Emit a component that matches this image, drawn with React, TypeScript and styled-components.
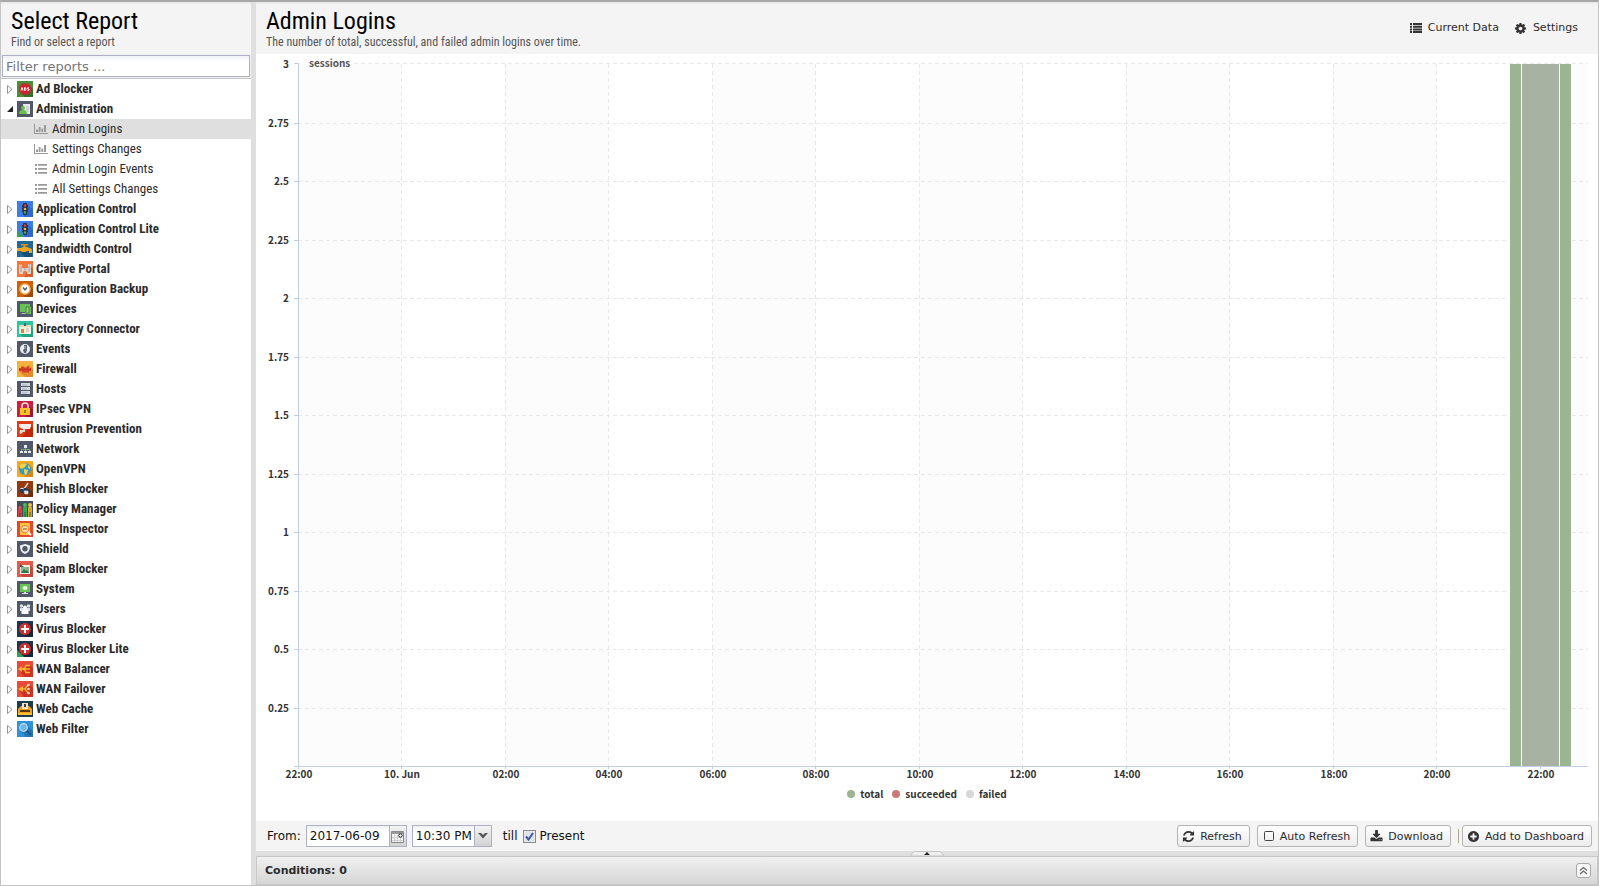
import React, { useLayoutEffect, useRef, useState } from 'react';
import styled, { createGlobalStyle } from 'styled-components';

const condensed = `"Roboto Condensed", "Liberation Sans Narrow", "DejaVu Sans Condensed", sans-serif`;
const ui = `"DejaVu Sans", sans-serif`;
const chartFont = `"Noto Sans CJK SC", "Noto Sans", sans-serif`;

const GlobalStyle = createGlobalStyle`
  *, *::before, *::after { box-sizing: border-box; }
  body { margin: 0; background: #dfdfdf; font-family: ${ui}; font-size: 12px; color: #2b2b2b; }
  button, input, select { font: inherit; color: inherit; margin: 0; }
  ul { list-style: none; margin: 0; padding: 0; }
`;

/* ---------- layout ---------- */

const Page = styled.div`
  display: flex;
  gap: 5px;
  min-height: 100vh;
  border: 1px solid #c4c4c4;
  border-top: 2px solid #a8a8a8;
  background: #dfdfdf;
`;

const Sidebar = styled.aside`
  flex: 0 0 250px;
  display: flex;
  flex-direction: column;
  background: #fff;
`;

const Main = styled.main`
  flex: 1;
  min-width: 0;
  display: flex;
  flex-direction: column;
`;

const Header = styled.header`
  display: flex;
  align-items: center;
  justify-content: space-between;
  height: 52px;
  padding: 0 20px 0 10px;
  background: linear-gradient(#e8e8e8, #f4f4f4 3px);
  color: #000;
`;

const Title = styled.h1`
  margin: 0;
  font: 400 24px/28px ${condensed};
`;

const Subtitle = styled.p`
  margin: 0;
  font: 400 12px/14px ${condensed};
  color: #555;
`;

const HeaderActions = styled.div`
  display: flex;
  gap: 15px;
`;

const LinkButton = styled.button`
  display: flex;
  align-items: center;
  gap: 6px;
  padding: 0;
  border: 0;
  background: none;
  font-size: 11px;
  line-height: 16px;
  color: #2b2b2b;
`;

/* ---------- report tree ---------- */

const FilterBar = styled.div`
  padding: 1px;
  background: #f0f0f0;
  border-bottom: 1px solid #c4c4c4;
`;

const FilterInput = styled.input`
  display: block;
  width: 100%;
  height: 22px;
  padding: 0 3px;
  border: 1px solid #aeb1c6;
  background: linear-gradient(#eef0f4, #fff 5px);
  font-size: 13px;
  &::placeholder { color: #757575; }
`;

const TreeRow = styled.button`
  display: flex;
  align-items: center;
  width: 100%;
  height: 20px;
  padding: 0 0 0 4px;
  border: 0;
  background: none;
  text-align: left;
  font: 700 13px/20px ${condensed};
  white-space: nowrap;
  svg { flex: none; }
`;

const RowIcon = styled.svg`
  margin-right: 3px;
`;

const Leaf = styled.a<{ $selected?: boolean }>`
  display: flex;
  align-items: center;
  gap: 4px;
  height: 20px;
  padding-left: 33px;
  background: ${p => (p.$selected ? '#dfdfdf' : 'transparent')};
  color: #2b2b2b;
  text-decoration: none;
  font: 400 13px/20px ${condensed};
  white-space: nowrap;
`;

/* ---------- chart ---------- */

const ChartPanel = styled.section`
  flex: 1;
  min-height: 300px;
  display: flex;
  flex-direction: column;
  padding-bottom: 18px;
  background: #fff;
`;

const Canvas = styled.div`
  flex: 1;
  min-height: 0;
  overflow: hidden;
  svg { display: block; }
  text { font: 700 10px ${chartFont}; fill: #333; }
  .axis-title { fill: #555; }
`;

const Legend = styled.ul`
  display: flex;
  justify-content: center;
  gap: 9px;
  font: 700 10px/18px ${chartFont};
  color: #333;
`;

const LegendItem = styled.li<{ $color: string }>`
  display: flex;
  align-items: center;
  gap: 5px;
  &::before {
    content: '';
    width: 8px;
    height: 8px;
    border-radius: 50%;
    background: ${p => p.$color};
  }
`;

/* ---------- footer toolbar ---------- */

const Toolbar = styled.form`
  display: flex;
  align-items: center;
  justify-content: space-between;
  height: 30px;
  padding: 0 6px 0 11px;
  background: #f4f4f4;
  color: #111;
  font-size: 12px;
`;

const Group = styled.div`
  display: flex;
  align-items: center;
  gap: 5px;
`;

const Actions = styled(Group)`
  gap: 7px;
`;

const Field = styled.span`
  display: flex;
  position: relative;
  height: 22px;
  border: 1px solid #aeb1c6;
  background: linear-gradient(#eef0f4, #fff 5px);
`;

const DateInput = styled.input`
  width: 82px;
  padding: 0 3px;
  border: 0;
  background: none;
  font-size: 12px;
`;

const TriggerFace = styled.span`
  display: flex;
  align-items: center;
  justify-content: center;
  width: 17px;
  height: 20px;
  padding: 0;
  border: 0;
  border-left: 1px solid #aeb1c6;
  background: linear-gradient(#f4f4f4, #d2d2d2);
`;

const SelectArrow = styled(TriggerFace)`
  position: absolute;
  right: 0;
  top: 0;
  pointer-events: none;
`;

const TimeSelect = styled.select`
  width: 78px;
  padding: 0 20px 0 3px;
  border: 0;
  appearance: none;
  background: none;
  font-size: 12px;
`;

const CheckLabel = styled.label`
  display: flex;
  align-items: center;
  gap: 4px;
`;

const CheckBox = styled.span`
  display: grid;
  place-items: center;
  > * { grid-area: 1 / 1; }
  svg { pointer-events: none; }
`;

const CheckInput = styled.input`
  appearance: none;
  width: 13px;
  height: 13px;
  border: 1px solid #8b8b8b;
  box-shadow: inset 0 0 0 1px #e8e8e8;
  background: #dfe3ea;
  &:not(:checked) + svg { display: none; }
`;

const Till = styled.span`
  margin-left: 6px;
`;

const ToolButton = styled.button`
  display: flex;
  align-items: center;
  gap: 5px;
  height: 22px;
  padding: 0 7px 0 4px;
  border: 1px solid #b4b4b4;
  border-radius: 3px;
  background: linear-gradient(#fff, #ececec);
  font-size: 11px;
  color: #2b2b2b;
  white-space: nowrap;
`;

const Separator = styled.span`
  width: 1px;
  height: 14px;
  margin-right: -4px;
  background: #aca899;
`;

const Splitter = styled.div`
  display: flex;
  justify-content: center;
  align-items: flex-end;
  height: 5px;
  background: #dfdfdf;
`;

const Conditions = styled.section`
  display: flex;
  align-items: center;
  justify-content: space-between;
  height: 29px;
  padding: 0 6px 0 8px;
  border: 1px solid #c8c8c8;
  background: linear-gradient(#f0f0f0, #d6d6d6);
`;

const ConditionsTitle = styled.h2`
  margin: 0;
  font: 700 11px/16px ${ui};
`;

const ExpandButton = styled.button`
  display: grid;
  place-items: center;
  width: 15px;
  height: 15px;
  padding: 0;
  border: 1px solid #a8a8a8;
  border-radius: 3px;
  background: #f6f6f6;
`;

/* ---------- icons ---------- */

const Glyph = ({ d, size = 13 }: { d: string; size?: number }) => (
  <svg width={size} height={size} viewBox="0 0 1792 1792" fill="#333" aria-hidden="true">
    <path d={d} />
  </svg>
);

const COG =
  'M1152 896q0-106-75-181t-181-75-181 75-75 181 75 181 181 75 181-75 75-181zm512-109v222q0 12-8 23t-20 13l-185 28q-19 54-39 91 35 50 107 138 10 12 10 25t-9 23q-27 37-99 108t-94 71q-12 0-26-9l-138-108q-44 23-91 38-16 136-29 186-7 28-36 28h-222q-14 0-24.5-8.5t-11.5-21.5l-28-184q-49-16-90-37l-141 107q-10 9-25 9-14 0-25-11-126-114-165-168-7-10-7-23 0-12 8-23 15-21 51-66.5t54-70.5q-27-50-41-99l-183-27q-13-2-21-12.5t-8-23.5v-222q0-12 8-23t19-13l186-28q14-46 39-92-40-57-107-138-10-12-10-24 0-10 9-23 26-36 98.5-107.5t94.5-71.5q13 0 26 10l138 107q44-23 91-38 16-136 29-186 7-28 36-28h222q14 0 24.5 8.5t11.5 21.5l28 184q49 16 90 37l142-107q9-9 24-9 13 0 25 10 129 119 165 170 7 8 7 22 0 12-8 23-15 21-51 66.5t-54 70.5q26 50 41 98l183 28q13 2 21 12.5t8 23.5z';
const PLUS =
  'M1344 960v-128q0-26-19-45t-45-19h-256v-256q0-26-19-45t-45-19h-128q-26 0-45 19t-19 45v256h-256q-26 0-45 19t-19 45v128q0 26 19 45t45 19h256v256q0 26 19 45t45 19h128q26 0 45-19t19-45v-256h256q26 0 45-19t19-45zm320-64q0 209-103 385.5t-279.5 279.5-385.5 103-385.5-103-279.5-279.5-103-385.5 103-385.5 279.5-279.5 385.5-103 385.5 103 279.5 279.5 103 385.5z';
const DOWNLOAD =
  'M1344 1344q0-26-19-45t-45-19-45 19-19 45 19 45 45 19 45-19 19-45zm256 0q0-26-19-45t-45-19-45 19-19 45 19 45 45 19 45-19 19-45zm128-224v320q0 40-28 68t-68 28h-1472q-40 0-68-28t-28-68v-320q0-40 28-68t68-28h465l135 136q58 56 136 56t136-56l136-136h464q40 0 68 28t28 68zm-325-569q17 41-14 70l-448 448q-18 19-45 19t-45-19l-448-448q-31-29-14-70 17-39 59-39h256v-448q0-26 19-45t45-19h256q26 0 45 19t19 45v448h256q42 0 59 39z';
const REFRESH =
  'M1639 1056q0 5-1 7-64 268-268 434.5t-478 166.5q-146 0-282.5-55t-243.5-157l-129 129q-19 19-45 19t-45-19-19-45v-448q0-26 19-45t45-19h448q26 0 45 19t19 45-19 45l-137 137q71 66 161 102t187 36q134 0 250-65t186-179q11-17 53-117 8-23 30-23h192q13 0 22.5 9.5t9.5 22.5zm25-800v448q0 26-19 45t-45 19h-448q-26 0-45-19t-19-45 19-45l138-138q-148-137-349-137-134 0-250 65t-186 179q-11 17-53 117-8 23-30 23h-199q-13 0-22.5-9.5t-9.5-22.5v-7q65-268 270-434.5t480-166.5q146 0 284 55.5t245 156.5l130-129q19-19 45-19t45 19 19 45z';

const ListIcon = () => (
  <svg width="12" height="10" viewBox="0 0 12 10" fill="#333" aria-hidden="true">
    <path d="M0 0h2v2H0zM3 0h9v2H3zM0 2.7h2v2H0zM3 2.7h9v2H3zM0 5.4h2v2H0zM3 5.4h9v2H3zM0 8h2v2H0zM3 8h9v2H3z" />
  </svg>
);

const ChartLeafIcon = () => (
  <svg width="14" height="12" viewBox="0 0 14 12" fill="#999" aria-hidden="true">
    <path d="M0 1h1v9h13v1H0zM2 6.500h2V9H2zM4.700 4h1.800v5H4.700zM7.400 5.500h1.800V9H7.400zM10 2h2v7h-2z" />
  </svg>
);

const ListLeafIcon = () => (
  <svg width="14" height="12" viewBox="0 0 14 12" fill="#999" aria-hidden="true">
    <path d="M1 1h2v2H1zM1 5h2v2H1zM1 9h2v2H1zM4 1h9v1.700H4zM4 5h9v1.700H4zM4 9h9v1.700H4z" />
  </svg>
);

const Expander = ({ open }: { open?: boolean }) => (
  <svg width="12" height="12" viewBox="0 0 12 12" aria-hidden="true">
    {open ? (
      <path d="M8 3v6H2z" fill="#222" />
    ) : (
      <path d="M2.500 2.500v8L7 6.500z" fill="#fff" stroke="#999" />
    )}
  </svg>
);

const trafficLight = (
  <>
    <path d="M0 0h16v16H0z" fill="#3c7de6" />
    <path d="M10 3l6 6v7h-8l-2-3z" fill="#2f66d0" />
    <path d="M5 4h6v2l-1 1h1v2l-1 1h1v1l-2 1H7l-2-1v-1h1L5 9V7h1L5 6z" fill="#2c3345" />
    <rect x="6" y="2" width="4" height="12" rx="1" fill="#263044" />
    <circle cx="8" cy="4.500" r="1.300" fill="#e0453a" />
    <circle cx="8" cy="8" r="1.300" fill="#e8b534" />
    <circle cx="8" cy="11.500" r="1.300" fill="#45b54c" />
  </>
);
const virusCross = (
  <>
    <path d="M0 0h16v16H0z" fill="#1f3550" />
    <path d="M12 3l4 4v9H8l-4-4z" fill="#152638" />
    <circle cx="8" cy="8" r="6" fill="#d0312d" />
    <path d="M7 4h2v3h3v2H9v3H7V9H4V7h3z" fill="#fff" />
  </>
);
const liteBadge = <path d="M0 9l7 7H0z" fill="#35a05a" />;
const slate = <path d="M0 0h16v16H0z" fill="#50586a" />;

const art: Record<string, React.ReactNode> = {
  'Ad Blocker': (
    <>
      <path d="M0 0h16v16H0z" fill="#4a8f35" />
      <path d="M12 4l4 4v8H8l-4-4z" fill="#376f28" />
      <path d="M5 2.500h6L14 6v4l-3 3.500H5L2 10V6z" fill="#cf2334" />
      <path d="M4 9.500l1-3 1 3M7.500 6.500v3q1.600 0 1.600-1.500T7.500 6.500M12 6.700h-1.300v1.300H12v1.400h-1.500" fill="none" stroke="#fff" strokeWidth=".9" />
    </>
  ),
  Administration: (
    <>
      {slate}
      <path d="M6 3h7v10H7z" fill="#e9ecee" />
      <path d="M9 6h3M9 8h3M9 10h3" stroke="#a7adb5" strokeWidth=".8" />
      <circle cx="6" cy="7" r="2" fill="#6cc04a" />
      <path d="M2 13q0-4 4-4t4 4z" fill="#6cc04a" />
    </>
  ),
  'Application Control': trafficLight,
  'Application Control Lite': <>{trafficLight}{liteBadge}</>,
  'Bandwidth Control': (
    <>
      <path d="M0 0h16v16H0z" fill="#206a94" />
      <path d="M3 10l12 2v4H8z" fill="#174f72" />
      <path d="M0 7h4l2-1h4l2 1q3 0 3 3v2h-3v-2h-2l-2 1H5L4 10H0z" fill="#f4a71d" />
      <path d="M4 3h7v1.500H8.500V6h-2V4.500H4z" fill="#e58e12" />
    </>
  ),
  'Captive Portal': (
    <>
      <path d="M0 0h16v16H0z" fill="#f4763b" />
      <path d="M13 5l3 3v8H7z" fill="#d55d27" />
      <path d="M2 3h1v1h1V3h1v4h6V3h1v1h1V3h1v10h-4v-2q-2-3-4 0v2H2z" fill="#d9d5d3" />
      <path d="M4 5v6M12 5v6M7 8h2" stroke="#a29d9d" />
    </>
  ),
  'Configuration Backup': (
    <>
      <path d="M0 0h16v16H0z" fill="#cf5f08" />
      <path d="M12 4l4 4v8H8l-4-4z" fill="#a04607" />
      <circle cx="8" cy="8" r="5.200" fill="#fff" stroke="#f2a13a" strokeWidth="1.500" />
      <path d="M6 6.500L8 9l2-2.500" fill="none" stroke="#465a70" strokeWidth="1.400" />
    </>
  ),
  Devices: (
    <>
      {slate}
      <path d="M3 3h10v3h1v7H8v-2H3z" fill="#69c055" />
      <path d="M9 6h3v6H9z" fill="#8ad377" stroke="#3e6b3d" strokeWidth=".7" />
      <path d="M5 12h3v1H4z" fill="#a7cf9c" />
    </>
  ),
  'Directory Connector': (
    <>
      <path d="M0 0h16v16H0z" fill="#2cc5a2" />
      <path d="M13 5l3 2v9H6l-3-3z" fill="#1da586" />
      <path d="M2 4h12v9H2z" fill="#f4efe3" />
      <path d="M2 4h12v2H2z" fill="#e9d9b5" />
      <path d="M7 2h2v3H7z" fill="#4c6371" />
      <path d="M4 8h3v4H4z" fill="#e7802f" />
      <path d="M9 8h3M9 10h3" stroke="#b9b9b4" />
    </>
  ),
  Events: (
    <>
      {slate}
      <circle cx="8" cy="8" r="5" fill="#e9edf0" />
      <path d="M7 4h3v5l-1 3H7L6 9l1-1z" fill="#596174" />
      <path d="M8 5v3" stroke="#c9ced6" />
    </>
  ),
  Firewall: (
    <>
      <path d="M0 0h16v16H0z" fill="#f2b23d" />
      <path d="M12 4l4 4v8H8L2 10z" fill="#e58a28" />
      <path d="M4 5.500h3v1h3v-1h2V7h2v3h-2v1.500H5V10H2V7h2z" fill="#d6402b" />
      <path d="M2 8.500h12" stroke="#b5321f" strokeWidth=".7" />
    </>
  ),
  Hosts: (
    <>
      {slate}
      <path d="M4 2h9v3H4zM4 6h9v3H4zM4 10h9v3H4z" fill="#d3d9df" />
      <path d="M5 4h5M5 8h5M5 12h5" stroke="#9aa3ae" strokeWidth=".8" />
    </>
  ),
  'IPsec VPN': (
    <>
      <path d="M0 0h16v16H0z" fill="#cd1f3f" />
      <path d="M12 5l4 4v7H8z" fill="#a01532" />
      <path d="M5 8V5q0-3 3-3t3 3v3" fill="none" stroke="#e6e3e0" strokeWidth="1.500" />
      <path d="M3 7h10v7H3z" fill="#f6c52e" />
      <path d="M7.200 9h1.600v3H7.200z" fill="#9b6a12" />
    </>
  ),
  'Intrusion Prevention': (
    <>
      <path d="M0 0h16v16H0z" fill="#df3b17" />
      <path d="M13 5l3 2v9H5z" fill="#c12607" />
      <path d="M2 3h12v2l-1 3H6L2 6z" fill="#f1eeec" />
      <path d="M6 8h2v3H4v2H3V9h3z" fill="#d8d2cf" />
      <circle cx="4" cy="11" r="1.500" fill="#e8e4e2" />
    </>
  ),
  Network: (
    <>
      {slate}
      <path d="M7 4h3v3H7zM3 10h3v2H3zM7 10h3v2H7zM11 10h3v2h-3z" fill="#e6eaee" />
      <path d="M8.500 7v3M4.500 10V8.500h8V10" fill="none" stroke="#79c16a" strokeWidth=".8" />
    </>
  ),
  OpenVPN: (
    <>
      <path d="M0 0h16v16H0z" fill="#f7a81b" />
      <path d="M13 4l3 3v9H7z" fill="#dd8712" />
      <circle cx="8" cy="8" r="6" fill="#2a9bd0" />
      <path d="M3 4q3-3 7-1L8 6 5 8 3 7zM7 8l4 1-1 4-2 1-1-3zM11 4l2 2v2l-2-1z" fill="#f6d24a" />
    </>
  ),
  'Phish Blocker': (
    <>
      <path d="M0 0h16v16H0z" fill="#96380f" />
      <path d="M12 8l4 3v5H6z" fill="#74290a" />
      <path d="M11 2L7 8" stroke="#d8d5d2" strokeWidth="1.500" />
      <path d="M3 7h6l4 2v3H4q-2-2-1-5z" fill="#273c5a" />
      <path d="M3 8q2-2 4 0M7 10h4v3H8z" fill="#eee5d2" stroke="#c9d5df" strokeWidth=".7" />
    </>
  ),
  'Policy Manager': (
    <>
      <path d="M0 0h16v16H0z" fill="#454c5b" />
      <path d="M1 8h4v8H1z" fill="#d9403b" />
      <circle cx="3" cy="6.500" r="1.700" fill="#e0534d" />
      <path d="M6 6h4v10H6z" fill="#37a84f" />
      <circle cx="8" cy="4" r="2" fill="#45c060" />
      <path d="M11 6h4v10h-4z" fill="#d3a62e" />
      <circle cx="13" cy="4" r="2" fill="#e7bf4c" />
      <path d="M3 12v4M8 11v5M13 11v5" stroke="#333c46" strokeWidth=".8" />
    </>
  ),
  'SSL Inspector': (
    <>
      <path d="M0 0h16v16H0z" fill="#e8452e" />
      <path d="M3 2h9l1 1v11H3z" fill="#f8c744" />
      <circle cx="8" cy="8" r="3.700" fill="#f6e1b4" stroke="#ee8d2c" strokeWidth="1.200" />
      <path d="M6 8h4" stroke="#d56b35" strokeWidth="1.500" />
      <path d="M11 11l3 3" stroke="#fff" strokeWidth="1.800" />
    </>
  ),
  Shield: (
    <>
      {slate}
      <path d="M8 3l5 1.500Q13.500 11 8 13 2.500 11 3 4.500z" fill="#eef1f3" />
      <circle cx="8" cy="7.700" r="2.700" fill="#4e5668" />
    </>
  ),
  'Spam Blocker': (
    <>
      <path d="M0 0h16v16H0z" fill="#e65a4e" />
      <path d="M13 4l3 3v9H6l-3-3z" fill="#c9443b" />
      <path d="M3 4h10v9H3z" fill="#f3eee4" />
      <path d="M4 6h8v6H4z" fill="#88b58d" />
      <path d="M4 12l3-4 2 2 1-1 2 3z" fill="#2d7750" />
      <path d="M3 3l4 3H3z" fill="#4f4c48" />
    </>
  ),
  System: (
    <>
      {slate}
      <path d="M3 3h10v8H3z" fill="#67c453" />
      <ellipse cx="8" cy="7" rx="2.500" ry="2" fill="#eef5ec" />
      <path d="M7 11h2v1h2v1H5v-1h2z" fill="#dbe0e3" />
    </>
  ),
  Users: (
    <>
      {slate}
      <circle cx="4.500" cy="5" r="1.700" fill="#dfe3e8" />
      <circle cx="11.500" cy="5" r="1.700" fill="#dfe3e8" />
      <path d="M3 7h10v3H3z" fill="#dfe3e8" />
      <circle cx="8" cy="6.500" r="2" fill="#fff" />
      <path d="M4.500 13V9.500l2-1h3l2 1V13z" fill="#fff" />
    </>
  ),
  'Virus Blocker': virusCross,
  'Virus Blocker Lite': <>{virusCross}{liteBadge}</>,
  'WAN Balancer': (
    <>
      <path d="M0 0h16v16H0z" fill="#e84b37" />
      <path d="M13 4l3 3v9H7l-4-6z" fill="#cc3322" />
      <path d="M4 8h9M5 8q3 0 4-3.500h4M5 8q3 0 4 3.500h4" fill="none" stroke="#f8b52e" strokeWidth="1.400" />
      <path d="M1 8l4-3v6z" fill="#f8b52e" />
    </>
  ),
  'WAN Failover': (
    <>
      <path d="M0 0h16v16H0z" fill="#e84b37" />
      <path d="M13 4l3 3v9H7l-4-6z" fill="#cc3322" />
      <path d="M4 8h4l3-4M8 8l3 4" fill="none" stroke="#f8b52e" strokeWidth="1.500" />
      <path d="M1 8l5-3v6z" fill="#f8b52e" />
      <circle cx="11.500" cy="4" r="1.300" fill="#f6d8d2" />
      <circle cx="11.500" cy="8" r="1.300" fill="#f6d8d2" />
      <circle cx="11.500" cy="12" r="1.300" fill="#f6d8d2" />
    </>
  ),
  'Web Cache': (
    <>
      <path d="M0 0h16v16H0z" fill="#1d3c4e" />
      <path d="M1 8l3-3h8l3 3v5H1z" fill="#f3a11c" />
      <path d="M5 2h6v6H5z" fill="#f3e4bf" />
      <path d="M7 3h2v3H7z" fill="#35404a" />
      <path d="M3 9h10v2H3z" fill="#543810" />
      <path d="M1 12h14v2H1z" fill="#ffbd32" />
    </>
  ),
  'Web Filter': (
    <>
      <path d="M0 0h16v16H0z" fill="#2f92d6" />
      <path d="M10 4l6 6v6H9l-5-6z" fill="#2477b5" />
      <path d="M9 9l5 5" stroke="#1c5787" strokeWidth="2" />
      <circle cx="6.500" cy="6.500" r="3.800" fill="#6cb8e8" stroke="#c6dfee" strokeWidth="1.200" />
    </>
  ),
};

/* ---------- data ---------- */

const leaves = [
  { name: 'Admin Logins', chart: true, selected: true },
  { name: 'Settings Changes', chart: true },
  { name: 'Admin Login Events' },
  { name: 'All Settings Changes' },
];

const xLabels = ['22:00', '10. Jun', '02:00', '04:00', '06:00', '08:00', '10:00', '12:00', '14:00', '16:00', '18:00', '20:00', '22:00'];
const yLabels = ['3', '2.75', '2.5', '2.25', '2', '1.75', '1.5', '1.25', '1', '0.75', '0.5', '0.25'];
const hourSpan = 24.93;
const bars = [
  { from: 23.42, to: 23.63, fill: '#9bb593' },
  { from: 23.65, to: 24.37, fill: '#a7b2a3' },
  { from: 24.39, to: 24.6, fill: '#9bb593' },
];

function LoginsChart() {
  const ref = useRef<HTMLDivElement>(null);
  const [size, setSize] = useState({ w: 1341, h: 731 });

  useLayoutEffect(() => {
    const el = ref.current;
    if (!el) return;
    const measure = () => setSize({ w: el.clientWidth, h: el.clientHeight });
    measure();
    const observer = new ResizeObserver(measure);
    observer.observe(el);
    return () => observer.disconnect();
  }, []);

  const left = 42;
  const right = size.w - 10;
  const top = 10;
  const bottom = size.h - 19;
  const xAt = (hour: number) => Math.round(left + ((right - left) * hour) / hourSpan);
  const yAt = (i: number) => Math.round(top + ((bottom - top) * i) / 12);
  const lineY = (i: number) => (i ? yAt(i) + 0.5 : top - 0.5);

  return (
    <Canvas ref={ref}>
      <svg width={size.w} height={size.h} role="img" aria-label="Admin logins over time">
        {xLabels.map((_, i) =>
          i % 2 === 0 ? (
            <rect key={i} x={xAt(i * 2)} y={top} width={Math.min(xAt(i * 2 + 2), right) - xAt(i * 2)} height={bottom - top} fill="#fcfcfc" />
          ) : null,
        )}
        <g stroke="#e8e8e8" strokeDasharray="4 3" shapeRendering="crispEdges">
          {yLabels.map((_, i) => (
            <path key={i} d={`M${i ? left : left + 56} ${lineY(i)}H${right}`} />
          ))}
          {xLabels.map((_, i) => (i ? <path key={i} d={`M${xAt(i * 2) + 0.5} ${top}V${bottom}`} /> : null))}
        </g>
        {bars.map(b => (
          <g key={b.from}>
            <rect x={xAt(b.from) - 1} y={top} width={xAt(b.to) - xAt(b.from) + 2} height={bottom - top} fill="#fff" />
            <rect x={xAt(b.from)} y={top} width={xAt(b.to) - xAt(b.from)} height={bottom - top} fill={b.fill} />
          </g>
        ))}
        <g stroke="#c0d0e0" fill="none" shapeRendering="crispEdges">
          <path d={`M${left + 0.5} ${top - 1}V${bottom + 2}M${left - 4} ${bottom + 0.5}H${right}`} />
          {yLabels.map((_, i) => (
            <path key={i} d={`M${left - 4} ${lineY(i)}H${left}`} />
          ))}
          {xLabels.map((_, i) => (
            <path key={i} d={`M${xAt(i * 2) + 0.5} ${bottom}V${bottom + 3}`} />
          ))}
        </g>
        {yLabels.map((t, i) => (
          <text key={t} x={left - 9} y={yAt(i) + 4} textAnchor="end">{t}</text>
        ))}
        {xLabels.map((t, i) => (
          <text key={i} x={xAt(i * 2) + 1} y={bottom + 12} textAnchor="middle">{t}</text>
        ))}
        <text className="axis-title" x={left + 11} y={top + 3}>sessions</text>
      </svg>
    </Canvas>
  );
}

export default function App() {
  return (
    <>
      <GlobalStyle />
      <Page>
        <Sidebar>
          <Header>
            <div>
              <Title>Select Report</Title>
              <Subtitle>Find or select a report</Subtitle>
            </div>
          </Header>
          <FilterBar>
            <FilterInput type="text" placeholder="Filter reports ..." aria-label="Filter reports" />
          </FilterBar>
          <ul>
            {Object.keys(art).map(name => {
              const open = name === 'Administration';
              return (
                <li key={name}>
                  <TreeRow type="button" aria-expanded={open}>
                    <Expander open={open} />
                    <RowIcon width="16" height="16" viewBox="0 0 16 16" aria-hidden="true">{art[name]}</RowIcon>
                    {name}
                  </TreeRow>
                  {open && (
                    <ul>
                      {leaves.map(leaf => (
                        <li key={leaf.name}>
                          <Leaf href="#" $selected={leaf.selected}>
                            {leaf.chart ? <ChartLeafIcon /> : <ListLeafIcon />}
                            {leaf.name}
                          </Leaf>
                        </li>
                      ))}
                    </ul>
                  )}
                </li>
              );
            })}
          </ul>
        </Sidebar>
        <Main>
          <Header>
            <div>
              <Title>Admin Logins</Title>
              <Subtitle>The number of total, successful, and failed admin logins over time.</Subtitle>
            </div>
            <HeaderActions>
              <LinkButton type="button"><ListIcon />Current Data</LinkButton>
              <LinkButton type="button"><Glyph d={COG} />Settings</LinkButton>
            </HeaderActions>
          </Header>
          <ChartPanel>
            <LoginsChart />
            <Legend>
              <LegendItem $color="#9bb593">total</LegendItem>
              <LegendItem $color="#c87a7a">succeeded</LegendItem>
              <LegendItem $color="#d8d8d8">failed</LegendItem>
            </Legend>
          </ChartPanel>
          <Toolbar onSubmit={e => e.preventDefault()}>
            <Group>
              <label htmlFor="from-date">From:</label>
              <Field>
                <DateInput id="from-date" type="text" defaultValue="2017-06-09" />
                <TriggerFace as="button" type="button" aria-label="Pick a date">
                  <svg width="13" height="13" viewBox="0 0 13 13" aria-hidden="true">
                    <path d="M.5 1.500h12v11H.5z" fill="#f4f4f4" stroke="#8a8a8a" />
                    <path d="M1 2h11v2H1z" fill="#999" />
                    <path d="M3.500 5v7M6.500 5v7M9.500 8v4M1 7.500h10M1 10.500h11" stroke="#cfcfcf" />
                    <circle cx="9.500" cy="5.500" r="1.700" fill="#fff" stroke="#222" />
                  </svg>
                </TriggerFace>
              </Field>
              <Field>
                <TimeSelect aria-label="From time" defaultValue="10:30 PM">
                  <option>10:30 PM</option>
                </TimeSelect>
                <SelectArrow>
                  <svg width="10" height="6" viewBox="0 0 10 6" aria-hidden="true">
                    <path d="M0 0h3l2 2 2-2h3L5 5.500z" fill="#555" />
                  </svg>
                </SelectArrow>
              </Field>
              <Till>till</Till>
              <CheckLabel>
                <CheckBox>
                  <CheckInput type="checkbox" defaultChecked />
                  <svg width="9" height="9" viewBox="0 0 9 9" aria-hidden="true">
                    <path d="M1 4.500l2.500 3L8 1" fill="none" stroke="#3f55a5" strokeWidth="2" />
                  </svg>
                </CheckBox>
                Present
              </CheckLabel>
            </Group>
            <Actions>
              <ToolButton type="button"><Glyph d={REFRESH} />Refresh</ToolButton>
              <ToolButton type="button">
                <svg width="13" height="13" viewBox="0 0 13 13" aria-hidden="true">
                  <rect x="2.500" y="1.500" width="9" height="9" rx="1" fill="none" stroke="#444" />
                </svg>
                Auto Refresh
              </ToolButton>
              <ToolButton type="button"><Glyph d={DOWNLOAD} />Download</ToolButton>
              <Separator />
              <ToolButton type="button"><Glyph d={PLUS} />Add to Dashboard</ToolButton>
            </Actions>
          </Toolbar>
          <Splitter>
            <svg width="34" height="5" viewBox="0 0 34 5" aria-hidden="true">
              <path d="M0 5L4 .5h26L34 5z" fill="#f0f0f0" stroke="#c4c4c4" />
              <path d="M14 4l3-3 3 3z" fill="#222" />
            </svg>
          </Splitter>
          <Conditions>
            <ConditionsTitle>Conditions: 0</ConditionsTitle>
            <ExpandButton type="button" aria-label="Expand conditions">
              <svg width="9" height="9" viewBox="0 0 9 9" fill="none" stroke="#666" strokeWidth="1.200" aria-hidden="true">
                <path d="M1 4.500l3.500-3 3.500 3M1 8l3.500-3L8 8" />
              </svg>
            </ExpandButton>
          </Conditions>
        </Main>
      </Page>
    </>
  );
}
